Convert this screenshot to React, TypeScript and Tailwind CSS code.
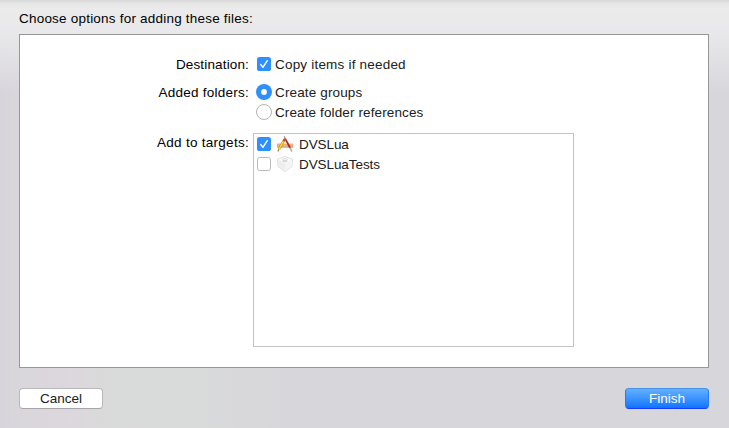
import React from "react";

function Checkbox({ checked }: { checked: boolean }) {
  return (
    <svg className="block h-[14px] w-[14px] shrink-0" viewBox="0 0 14 14" fill="none">
      {checked ? (
        <>
          <rect width="14" height="14" rx="2.6" fill="#2f8ffb" />
          <path d="M3.8 7.6 5.9 10.3 10.3 3.6" stroke="#fff" strokeWidth="1.4" strokeLinecap="round" strokeLinejoin="round" />
        </>
      ) : (
        <rect x=".5" y=".5" width="13" height="13" rx="2.3" fill="#fff" stroke="#b9b9b9" />
      )}
    </svg>
  );
}

function Radio({ checked }: { checked: boolean }) {
  return (
    <svg className="block h-4 w-4 shrink-0" viewBox="0 0 16 16" fill="none">
      {checked ? (
        <>
          <circle cx="8" cy="8" r="8" fill="#2f8ffb" />
          <circle cx="8" cy="8" r="2.9" fill="#fff" />
        </>
      ) : (
        <circle cx="8" cy="8" r="7.5" fill="#fff" stroke="#b4b4b4" />
      )}
    </svg>
  );
}

function AppIcon() {
  return (
    <svg className="block h-4 w-4 shrink-0" viewBox="0 0 16 16" fill="none">
      <rect x="0" y="7.5" width="16" height="4" fill="#eab184" />
      <path d="M0 11.2h16" stroke="#d79a69" strokeWidth=".7" />
      <path d="M7.2.2 8.6 3.4" stroke="#9c8a86" strokeWidth="1.1" />
      <path d="M8.3 2.9 13.2 12" stroke="#a32a20" strokeWidth="1.7" />
      <path d="m13 11.5 1.9 4.1" stroke="#b7a79c" strokeWidth="1.4" />
      <path d="M7.8 3.2 2 13.2" stroke="#a8741c" strokeWidth="2.4" />
      <path d="M6.5 5.3 1.8 13.3" stroke="#fbe12c" strokeWidth="1.6" />
      <path d="M8 2.6 6.7 5" stroke="#cf4735" strokeWidth="1.7" />
      <path d="m1.8 13.2-.9 2.3" stroke="#8c7956" strokeWidth="1.1" />
    </svg>
  );
}

function BundleIcon() {
  return (
    <svg className="block h-4 w-4 shrink-0" viewBox="0 0 16 16" fill="none">
      <path d="M8 .5 15.4 3.3 14.9 10.6 8 15.7 1.1 10.6.6 3.3Z" fill="#f4f4f4" stroke="#d6d6d6" strokeWidth=".8" strokeLinejoin="round" />
      <path d="M1 3.7 8 7.6v7.7L1.4 10.4Z" fill="#ededed" />
      <path d="M15 3.7 8 7.6v7.7l6.6-4.9Z" fill="#f4f4f4" />
      <path d="M1.2 3.5 8 .9l6.8 2.6L8 7.4Z" fill="#fcfcfc" />
      <path d="M5.7 3.6v1.6c0 1.4 4.6 1.4 4.6 0V3.6" fill="#d5d5d5" />
      <ellipse cx="8" cy="3.5" rx="2.3" ry="1.2" fill="#f2f2f2" stroke="#cbcbcb" strokeWidth=".5" />
    </svg>
  );
}

function Label({ tracking, children }: { tracking: string; children: React.ReactNode }) {
  return <div className={`w-[229px] shrink-0 pt-px text-right text-black ${tracking}`}>{children}</div>;
}

function Target({ checked, icon, name }: { checked: boolean; icon: React.ReactNode; name: string }) {
  return (
    <label className="flex h-5 items-center pl-[3px]">
      <Checkbox checked={checked} />
      <span className="ml-[6px]">{icon}</span>
      <span className="mt-0.5 ml-[6px] tracking-[-0.08px]">{name}</span>
    </label>
  );
}

export default function App() {
  return (
    <main className="flex h-[428px] w-[729px] flex-col bg-[linear-gradient(to_bottom,#d7d7d7_0,#e5e5e6_3px,#ebebec_8px,#e9e9eb_30px,transparent_95px),linear-gradient(to_right,#d7d5db_0,#dcd7dd_65px,#dadada_105px,#d9dada_200px,#d7d6db_290px,#d7d6db_100%)] pr-5 pl-[19px] font-['Liberation_Sans',Arial,sans-serif] text-[13.5px] leading-5 text-[#202020]">
      <h1 className="mt-[9px] h-[25px] tracking-[0.21px] text-black">Choose options for adding these files:</h1>
      <section className="h-[334px] w-[690px] border border-[#979797] bg-white pt-[19px]">
        <div className="flex h-5">
          <Label tracking="tracking-[0.15px]">Destination:</Label>
          <label className="ml-[8px] flex h-5 items-center gap-1">
            <Checkbox checked />
            <span className="mt-0.5 tracking-[0.2px]">Copy items if needed</span>
          </label>
        </div>
        <div className="mt-2 flex">
          <Label tracking="tracking-[0.25px]">Added folders:</Label>
          <div className="ml-[7px]">
            <label className="flex h-5 items-center gap-[3px]">
              <Radio checked />
              <span className="mt-0.5 tracking-[0.14px]">Create groups</span>
            </label>
            <label className="flex h-5 items-center gap-[3px]">
              <Radio checked={false} />
              <span className="mt-0.5 tracking-[0.12px]">Create folder references</span>
            </label>
          </div>
        </div>
        <div className="mt-[10px] flex">
          <Label tracking="tracking-[0.28px]">Add to targets:</Label>
          <div className="ml-[4px] mt-px h-[214px] w-[321px] border border-[#c3c3c3]">
            <Target checked icon={<AppIcon />} name="DVSLua" />
            <Target checked={false} icon={<BundleIcon />} name="DVSLuaTests" />
          </div>
        </div>
      </section>
      <footer className="mt-5 flex justify-between">
        <button className="h-[21px] w-[84px] rounded-[4px] border border-[#b9b8bd] border-b-[#a6a5aa] bg-white leading-[19px] text-[#202020]">Cancel</button>
        <button className="h-[21px] w-[84px] rounded-[4px] border border-t-[#4594ed] border-x-[#2878f8] border-b-[#173cff] bg-linear-to-b from-[#61b0ff] to-[#0974ff] leading-[19px] text-white">Finish</button>
      </footer>
    </main>
  );
}
